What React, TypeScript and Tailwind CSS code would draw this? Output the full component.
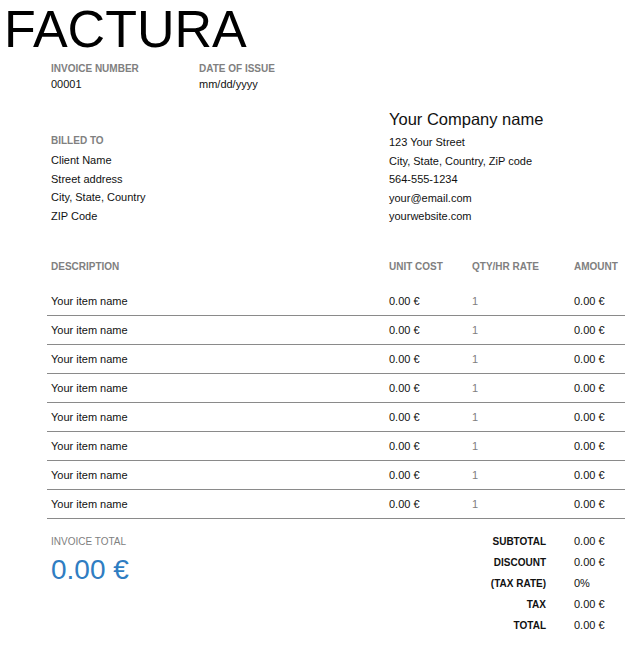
const cols = 'grid grid-cols-[338px_83px_102px_55px]'

const items = Array.from({ length: 8 }, () => ({
  name: 'Your item name',
  cost: '0.00 €',
  qty: '1',
  amount: '0.00 €',
}))

const totals = [
  ['SUBTOTAL', '0.00 €'],
  ['DISCOUNT', '0.00 €'],
  ['(TAX RATE)', '0%'],
  ['TAX', '0.00 €'],
  ['TOTAL', '0.00 €'],
]

function Label({ children }: { children: React.ReactNode }) {
  return <div className="text-[10px] font-bold leading-[16px] text-[#808080]">{children}</div>
}

export default function App() {
  return (
    <div className="min-h-[648px] w-[635px] bg-white font-['Liberation_Sans',Arial,sans-serif] text-[#111]">
      <h1 className="pl-[4px] pt-[3px] text-[52px] leading-none text-black">FACTURA</h1>

      <div className="mt-[6px] flex pl-[51px]">
        <div className="w-[148px]">
          <Label>INVOICE NUMBER</Label>
          <div className="text-[11px] leading-[15px]">00001</div>
        </div>
        <div>
          <Label>DATE OF ISSUE</Label>
          <div className="text-[11px] leading-[15px]">mm/dd/yyyy</div>
        </div>
      </div>

      <div className={`${cols} mt-[16px] w-[625px] pl-[47px]`}>
        <div className="pl-1 pt-[24px] text-[11px] leading-[18.75px]">
          <div className="text-[10px] font-bold text-[#808080]">BILLED TO</div>
          <div>Client Name</div>
          <div>Street address</div>
          <div>City, State, Country</div>
          <div>ZIP Code</div>
        </div>
        <div className="col-span-3 pl-1 text-[11px] leading-[18.5px]">
          <div className="mb-[3px] text-[16.5px] leading-[22px]">Your Company name</div>
          <div>123 Your Street</div>
          <div>City, State, Country, ZiP code</div>
          <div>564-555-1234</div>
          <div>your@email.com</div>
          <div>yourwebsite.com</div>
        </div>
      </div>

      <div className="ml-[47px] mt-[33px] w-[578px]">
        <div className={`${cols} h-[28px] text-[10px] font-bold leading-[16px] text-[#808080]`}>
          <div className="pl-1">DESCRIPTION</div>
          <div className="pl-1">UNIT COST</div>
          <div className="pl-1">QTY/HR RATE</div>
          <div className="pl-1">AMOUNT</div>
        </div>
        {items.map((it, i) => (
          <div
            key={i}
            className={`${cols} h-[29px] items-center border-b border-[#8a8a8a] text-[11px]`}
          >
            <div className="pl-1">{it.name}</div>
            <div className="pl-1">{it.cost}</div>
            <div className="pl-1 text-[#808080]">{it.qty}</div>
            <div className="pl-1">{it.amount}</div>
          </div>
        ))}

        <div className={`${cols} mt-[12px]`}>
          <div className="col-span-2 pl-1">
            <div className="text-[10px] leading-[21px] text-[#808080]">INVOICE TOTAL</div>
            <div className="mt-[2px] text-[28px] leading-[32px] text-[#2f7dc2]">0.00 €</div>
          </div>
          <div className="col-span-2">
            {totals.map(([label, value]) => (
              <div key={label} className="grid grid-cols-[102px_55px] leading-[21px]">
                <div className="pr-6 text-right text-[10px] font-bold">{label}</div>
                <div className="pl-1 text-[11px]">{value}</div>
              </div>
            ))}
          </div>
        </div>
      </div>
    </div>
  )
}
